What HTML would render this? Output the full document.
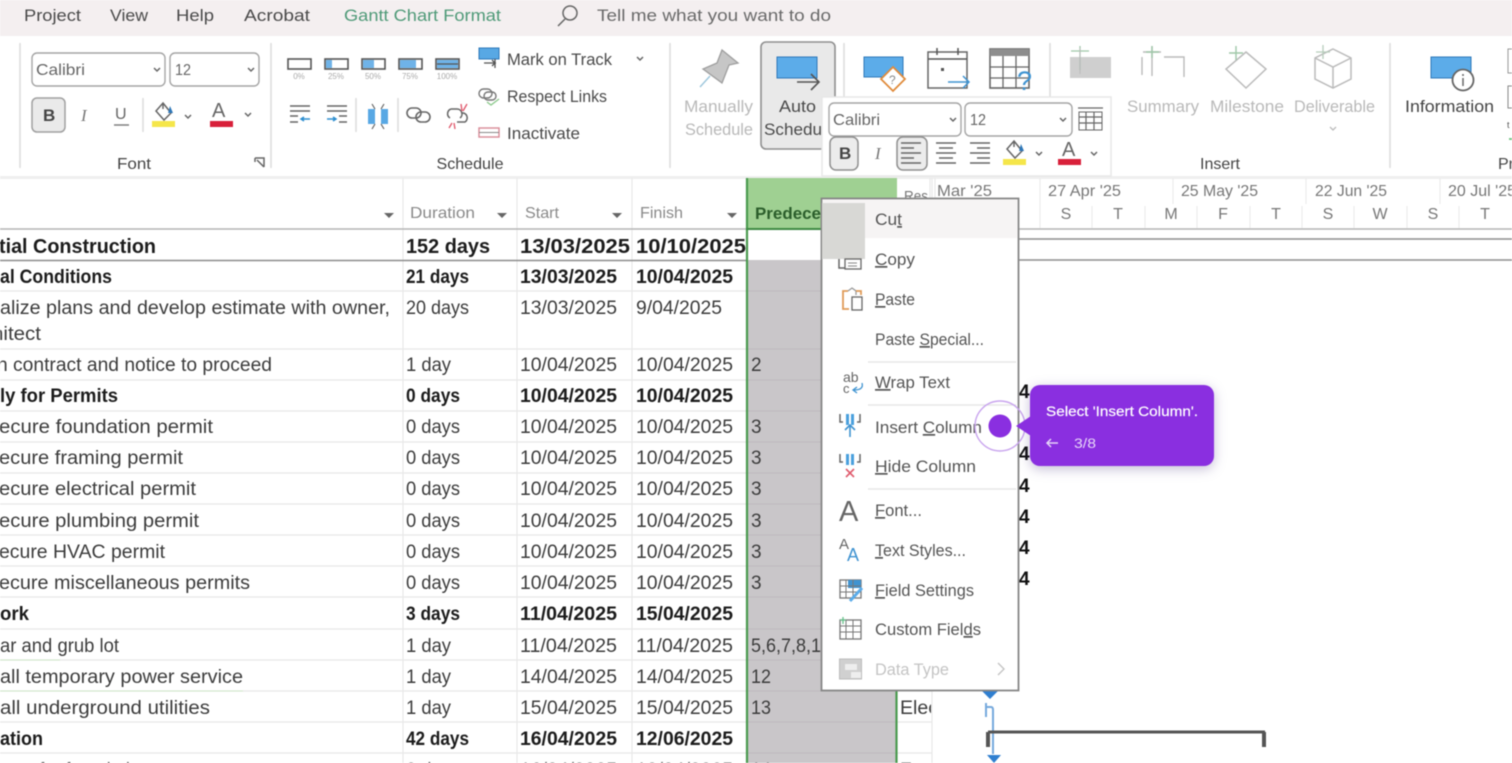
<!DOCTYPE html>
<html><head><meta charset="utf-8"><style>
html,body{margin:0;padding:0;background:#fff;width:1512px;height:763px;overflow:hidden}
svg{position:absolute;left:0;top:0;display:block}
text{font-family:"Liberation Sans",sans-serif}
.n{font-size:19px;fill:#3c3c3c}
.b{font-size:19px;font-weight:bold;fill:#1c1c1c}
.r{font-size:17px;fill:#4a4a4a}
.d{font-size:17px;fill:#b9b9b9}
.h{font-size:16px;fill:#666}
.m{font-size:17px;fill:#555}
.g{stroke:#e8e8e8;stroke-width:1.2}
.ic{fill:none;stroke:#666;stroke-width:1.5}
</style></head><body>
<svg width="1512" height="763" viewBox="0 0 1512 763" lang="en" style="filter:blur(.65px)">
<defs><clipPath id="c1"><rect x="897" y="690" width="34" height="80"/></clipPath></defs>
<rect width="1512" height="763" fill="#fff"/>
<!-- tab strip -->
<rect width="1512" height="36" fill="#f4eff0"/>
<text x="24" y="21" class="r" textLength="57" lengthAdjust="spacingAndGlyphs">Project</text>
<text x="110" y="21" class="r" textLength="38" lengthAdjust="spacingAndGlyphs">View</text>
<text x="176" y="21" class="r" textLength="38" lengthAdjust="spacingAndGlyphs">Help</text>
<text x="244" y="21" class="r" textLength="66" lengthAdjust="spacingAndGlyphs">Acrobat</text>
<text x="344" y="21" style="font-size:17px;fill:#4f9a78" textLength="157" lengthAdjust="spacingAndGlyphs">Gantt Chart Format</text>
<circle cx="570" cy="13" r="7" class="ic"/><path d="M565 19l-7 7" class="ic" stroke-width="2"/>
<text x="597" y="21" style="font-size:17px;fill:#6a6a6a" textLength="234" lengthAdjust="spacingAndGlyphs">Tell me what you want to do</text>
<!-- ribbon separators -->
<g stroke="#dcdcdc" stroke-width="1.5"><path d="M20 43V168M271 43V168M670 43V168M844 43V168M1050 43V100M1390 43V168M143 98V132M356 98V132M398 98V132"/></g>
<rect x="0" y="176" width="1512" height="3" fill="#efefef"/>
<!-- font group -->
<rect x="32" y="53" width="133" height="33" rx="5" fill="#fff" stroke="#a5a5a5" stroke-width="1.4"/>
<rect x="170" y="53" width="89" height="33" rx="5" fill="#fff" stroke="#a5a5a5" stroke-width="1.4"/>
<text x="36" y="75" class="h" textLength="49" lengthAdjust="spacingAndGlyphs">Calibri</text>
<text x="175" y="75" class="h" textLength="16" lengthAdjust="spacingAndGlyphs">12</text>
<path d="M154 68l3 3 3-3M248 68l3 3 3-3M185 115l3 3 3-3M245 113l3 3 3-3M637 57l3 3 3-3" class="ic"/>
<rect x="32" y="98" width="33" height="34" rx="5" fill="#eaeaea" stroke="#a0a0a0" stroke-width="1.5"/>
<text x="43" y="121" style="font-size:17px;font-weight:bold;fill:#444">B</text>
<text x="81" y="121" style="font-size:17px;font-style:italic;fill:#777;font-family:'Liberation Serif',serif">I</text>
<text x="115" y="119" style="font-size:16px;fill:#666">U</text><path d="M114 125h15" stroke="#777" stroke-width="1.4"/>
<path d="M163 103l8 10-7 7-8-9zM163 103v6" class="ic"/><path d="M170 106l3 7h-5z" fill="#2f78b9"/>
<rect x="152" y="121" width="23" height="6" fill="#f5e64a"/>
<text x="212" y="117" style="font-size:20px;fill:#666">A</text><rect x="210" y="121" width="23" height="6" fill="#d8203a"/>
<text x="134" y="169" text-anchor="middle" class="h" style="fill:#444" textLength="34" lengthAdjust="spacingAndGlyphs">Font</text>
<path d="M255 158h9v9M255 158v4M257 160l7 7" class="ic" stroke-width="1"/>
<text x="470" y="169" text-anchor="middle" class="h" style="fill:#444" textLength="67" lengthAdjust="spacingAndGlyphs">Schedule</text>
<!-- percent boxes -->
<g stroke="#555" stroke-width="1.6" fill="#fff">
<rect x="288" y="59" width="23" height="10"/><rect x="325" y="59" width="23" height="10"/><rect x="362" y="59" width="23" height="10"/><rect x="399" y="59" width="23" height="10"/><rect x="436" y="59" width="23" height="10"/></g>
<g fill="#6fb3e8"><rect x="326" y="60" width="6" height="8"/><rect x="363" y="60" width="11" height="8"/><rect x="400" y="60" width="16" height="8"/><rect x="437" y="60" width="21" height="8"/></g>
<path d="M437 64h21" stroke="#555" stroke-width="1.2"/>
<g text-anchor="middle"><text x="299" y="79" style="font-size:8px;fill:#aaa">0%</text><text x="336" y="79" style="font-size:8px;fill:#aaa">25%</text><text x="373" y="79" style="font-size:8px;fill:#aaa">50%</text><text x="410" y="79" style="font-size:8px;fill:#aaa">75%</text><text x="447" y="79" style="font-size:8px;fill:#aaa">100%</text></g>
<!-- indent -->
<path d="M290 106h20M290 111h20M290 116h8M290 122h8M327 106h20M327 111h20M339 116h8M339 122h8" stroke="#666" stroke-width="1.5"/>
<path d="M310 119h-8M304 117l-3 2 3 2M327 119h8M333 117l3 2-3 2" stroke="#2f8fd0" stroke-width="1.5" fill="none"/>
<rect x="368" y="109" width="7" height="15" fill="#58a8e4"/><rect x="381" y="109" width="7" height="15" fill="#58a8e4"/>
<path d="M372 104l3 5M384 104l-3 5M372 129l3-5M384 129l-3-5" stroke="#666" stroke-width="1.2"/>
<rect x="407" y="108" width="14" height="10" rx="5" fill="none" stroke="#666" stroke-width="1.6"/><rect x="416" y="112" width="14" height="10" rx="5" fill="none" stroke="#666" stroke-width="1.6"/>
<path d="M451 109h6a5 5 0 0 1 3 9M461 113a5 5 0 0 1 4 9h-8M450 118a5 5 0 0 1 1-9" class="ic"/>
<path d="M461 104l1 7M467 104l-4 7M449 128l3-5M455 129l-1-6" stroke="#e0566a" stroke-width="1.3"/>
<!-- schedule column right -->
<rect x="479" y="48" width="20" height="11" fill="#58a8e4" stroke="#2f78b9"/><path d="M484 63h12M492 60l3 3-3 3M495 59v9" stroke="#555" stroke-width="1.3" fill="none"/>
<text x="507" y="65" class="r" textLength="105" lengthAdjust="spacingAndGlyphs">Mark on Track</text>
<rect x="479" y="89" width="13" height="9" rx="4.5" fill="none" stroke="#777" stroke-width="1.4"/><rect x="484" y="92" width="12" height="8" rx="4" fill="none" stroke="#777" stroke-width="1.4"/><path d="M487 102l4 3 8-6" stroke="#8cc98c" stroke-width="1.4" fill="none"/>
<text x="507" y="102" class="r" textLength="100" lengthAdjust="spacingAndGlyphs">Respect Links</text>
<rect x="479" y="128" width="20" height="9" fill="#fff" stroke="#d98a97" stroke-width="1.4"/><path d="M479 132.500h20" stroke="#888"/>
<text x="507" y="139" class="r" textLength="73" lengthAdjust="spacingAndGlyphs">Inactivate</text>
<!-- pin + auto -->
<path d="M722 50L738 63 729 65 722 83 703 69 717 63Z" fill="#c6c6c6" stroke="#9e9e9e" stroke-width="1.3"/><path d="M710 76L700 87" stroke="#9cc6dc" stroke-width="1.4"/>
<text x="684" y="112" class="d" textLength="69" lengthAdjust="spacingAndGlyphs">Manually</text>
<text x="685" y="135" class="d" textLength="68" lengthAdjust="spacingAndGlyphs">Schedule</text>
<rect x="761" y="42" width="74" height="107" rx="5" fill="#e9e9e9" stroke="#8f8f8f" stroke-width="1.6"/>
<rect x="777" y="57" width="40" height="21" fill="#5cace9" stroke="#2f78b9"/>
<path d="M797 82h22M811 74l8 8-8 8" stroke="#555" stroke-width="1.6" fill="none"/>
<text x="779" y="112" class="r" textLength="37" lengthAdjust="spacingAndGlyphs">Auto</text>
<text x="764" y="135" class="r" textLength="58" lengthAdjust="spacingAndGlyphs">Schedu</text>
<!-- inspect etc -->
<rect x="864" y="57" width="39" height="20" fill="#5cace9" stroke="#2f78b9"/>
<path d="M893 67l12 12-12 12-12-12z" fill="#fff" stroke="#e08b3c" stroke-width="1.8"/><text x="889" y="84" style="font-size:12px;fill:#888">?</text>
<rect x="928" y="52" width="39" height="36" fill="#fff" stroke="#666" stroke-width="1.5"/><path d="M928 59h39M937 48v7M958 48v7" stroke="#555" stroke-width="1.5"/><rect x="941" y="68" width="3" height="3" fill="#555"/>
<path d="M948 82h21M963 76l6 6-6 6" stroke="#3f93d1" stroke-width="1.5" fill="none"/>
<rect x="990" y="49" width="39" height="39" fill="#fff" stroke="#666" stroke-width="1.6"/><rect x="990" y="49" width="39" height="7" fill="#8d8d8d"/><path d="M990 67h39M990 78h39M1003 56v32M1016 56v32" stroke="#666" stroke-width="1.3"/>
<text x="1017" y="90" style="font-size:27px;fill:#3f93d1">?</text>
<!-- insert group -->
<rect x="1070" y="57" width="41" height="21" fill="#cfcfcf"/><path d="M1080 46v24M1071 51h18" stroke="#9fc7a8" stroke-width="1.3"/><path d="M1080 48v26" stroke="#bbb"/>
<path d="M1152 46v30M1143 52h18M1164 57h20v20M1142 57v18" stroke="#bbb" stroke-width="1.4" fill="none"/><path d="M1152 46v12M1146 52h13" stroke="#9fc7a8" stroke-width="1.4"/>
<path d="M1246 52l20 17-20 19-20-19z" fill="#fff" stroke="#bbb" stroke-width="1.5"/><path d="M1236 46v14M1229 53h14" stroke="#9fc7a8" stroke-width="1.4"/>
<path d="M1333 49l18 9v21l-18 9-18-9V58zM1315 58l18 9 18-9M1333 67v21" fill="none" stroke="#bbb" stroke-width="1.5"/><path d="M1323 45v14M1316 52h14" stroke="#b7cdbc" stroke-width="1.3"/>
<text x="1127" y="112" class="d" textLength="72" lengthAdjust="spacingAndGlyphs">Summary</text>
<text x="1210" y="112" class="d" textLength="74" lengthAdjust="spacingAndGlyphs">Milestone</text>
<text x="1294" y="112" class="d" textLength="81" lengthAdjust="spacingAndGlyphs">Deliverable</text>
<path d="M1330 127l3 3 3-3" fill="none" stroke="#bbb" stroke-width="1.3"/>
<text x="1220" y="169" text-anchor="middle" class="h" style="fill:#444" textLength="40" lengthAdjust="spacingAndGlyphs">Insert</text>
<!-- information -->
<rect x="1431" y="57" width="40" height="21" fill="#5cace9" stroke="#2f78b9"/>
<circle cx="1463" cy="80" r="10.5" fill="#fff" stroke="#666" stroke-width="1.8"/><path d="M1463 78v8" stroke="#666" stroke-width="1.5"/><circle cx="1463" cy="75" r="1" fill="#666"/>
<text x="1405" y="112" style="font-size:17px;fill:#444" textLength="89" lengthAdjust="spacingAndGlyphs">Information</text>
<rect x="1508" y="49" width="8" height="24" fill="#fff" stroke="#999"/><rect x="1508" y="86" width="8" height="22" fill="#fff" stroke="#888"/><path d="M1509 139h6" stroke="#7cc98c" stroke-width="2"/><text x="1507" y="128" style="font-size:9px;fill:#555">t</text>
<text x="1498" y="169" class="h" style="fill:#444">Pr</text>

<!-- table header -->
<rect x="746" y="178" width="151" height="51" fill="#9fd092"/>
<g class="g"><path d="M403 178V763M517 178V763M632 178V763M932 178V763M930 178V229M935 178V229"/></g>
<text x="410" y="218" class="h" style="fill:#8a8a8a" textLength="65" lengthAdjust="spacingAndGlyphs">Duration</text>
<text x="525" y="218" class="h" style="fill:#8a8a8a" textLength="34" lengthAdjust="spacingAndGlyphs">Start</text>
<text x="640" y="218" class="h" style="fill:#8a8a8a" textLength="43" lengthAdjust="spacingAndGlyphs">Finish</text>
<g fill="#666"><path d="M384 213h10l-5 5zM497 213h10l-5 5zM612 213h10l-5 5zM727 213h10l-5 5z"/></g>
<text x="755" y="219" style="font-size:17px;font-weight:bold;fill:#2b5e2b" textLength="66" lengthAdjust="spacingAndGlyphs">Predece</text>
<text x="904" y="201" style="font-size:15px;fill:#777" textLength="24" lengthAdjust="spacingAndGlyphs">Res</text>
<text x="937" y="196" class="h" style="fill:#777" textLength="55" lengthAdjust="spacingAndGlyphs">Mar '25</text>
<text x="1048" y="196" class="h" style="fill:#777" textLength="73" lengthAdjust="spacingAndGlyphs">27 Apr '25</text>
<text x="1181" y="196" class="h" style="fill:#777" textLength="77" lengthAdjust="spacingAndGlyphs">25 May '25</text>
<text x="1315" y="196" class="h" style="fill:#777" textLength="72" lengthAdjust="spacingAndGlyphs">22 Jun '25</text>
<text x="1448" y="196" class="h" style="fill:#777" textLength="68" lengthAdjust="spacingAndGlyphs">20 Jul '25</text>
<g class="h" style="fill:#777" text-anchor="middle"><text x="1066" y="219">S</text><text x="1118" y="219">T</text><text x="1171" y="219">M</text><text x="1223" y="219">F</text><text x="1276" y="219">T</text><text x="1328" y="219">S</text><text x="1380" y="219">W</text><text x="1433" y="219">S</text><text x="1485" y="219">T</text></g>
<g stroke="#ececec" stroke-width="1.2"><path d="M1040 178V228M1173 178V204M1306 178V204M1440 178V204M1092 206V228M1145 206V228M1197 206V228M1250 206V228M1302 206V228M1354 206V228M1407 206V228M1459 206V228"/></g>

<!-- selected column -->
<rect x="748" y="260" width="148" height="503" fill="#c9c6c9"/>
<g stroke="#bdbabd" stroke-width="1"><path d="M748 291H896M748 349H896M748 380H896M748 411H896M748 442H896M748 473H896M748 504H896M748 535H896M748 566H896M748 597H896M748 629H896M748 660H896M748 691H896M748 722H896M748 753H896"/></g>
<!-- rows -->
<g class="g"><path d="M0 291H746M0 349H746M0 380H746M0 411H746M0 442H746M0 473H746M0 504H746M0 535H746M0 566H746M0 597H746M0 629H746M0 660H746M0 691H746M0 722H746M0 753H746M897 691H932M897 722H932M897 753H932"/></g>
<path d="M0 691H243M0 660H60" stroke="#cfe8c8" stroke-width="1"/>
<path d="M0 229H746M897 229H1512" stroke="#b5b5b5" stroke-width="1.4"/>
<path d="M0 260.500H746M897 260H1512M897 239H1512" stroke="#8d8d8d" stroke-width="1.6"/>
<path d="M747 178V763M896.500 229V763" stroke="#4a9a4f" stroke-width="2.200"/>
<path d="M746 229H897" stroke="#3d8a42" stroke-width="2"/>

<g transform="translate(0,1)">
<text x="-1" y="252" class="b" style="font-size:20px" textLength="157" lengthAdjust="spacingAndGlyphs">tial Construction</text>
<text x="406" y="252" class="b" style="font-size:20px" textLength="84" lengthAdjust="spacingAndGlyphs">152 days</text>
<text x="520" y="252" class="b" style="font-size:20px" textLength="110" lengthAdjust="spacingAndGlyphs">13/03/2025</text>
<text x="636" y="252" class="b" style="font-size:20px" textLength="110" lengthAdjust="spacingAndGlyphs">10/10/2025</text>

<text x="0" y="282" class="b" textLength="112" lengthAdjust="spacingAndGlyphs">al Conditions</text>
<text x="406" y="282" class="b" textLength="63" lengthAdjust="spacingAndGlyphs">21 days</text>
<text x="520" y="282" class="b" textLength="97" lengthAdjust="spacingAndGlyphs">13/03/2025</text>
<text x="636" y="282" class="b" textLength="97" lengthAdjust="spacingAndGlyphs">10/04/2025</text>

<text x="0" y="313" class="n" textLength="390" lengthAdjust="spacingAndGlyphs">alize plans and develop estimate with owner,</text>
<text x="-8" y="339" class="n" textLength="49" lengthAdjust="spacingAndGlyphs">hitect</text>
<text x="406" y="313" class="n" textLength="63" lengthAdjust="spacingAndGlyphs">20 days</text>
<text x="520" y="313" class="n" textLength="97" lengthAdjust="spacingAndGlyphs">13/03/2025</text>
<text x="636" y="313" class="n" textLength="86" lengthAdjust="spacingAndGlyphs">9/04/2025</text>

<text x="-3" y="370" class="n" textLength="275" lengthAdjust="spacingAndGlyphs">n contract and notice to proceed</text>
<text x="406" y="370" class="n" textLength="45" lengthAdjust="spacingAndGlyphs">1 day</text>
<text x="520" y="370" class="n" textLength="97" lengthAdjust="spacingAndGlyphs">10/04/2025</text>
<text x="636" y="370" class="n" textLength="97" lengthAdjust="spacingAndGlyphs">10/04/2025</text>
<text x="751" y="370" class="n">2</text>

<text x="0" y="401" class="b" textLength="118" lengthAdjust="spacingAndGlyphs">ly for Permits</text>
<text x="406" y="401" class="b" textLength="54" lengthAdjust="spacingAndGlyphs">0 days</text>
<text x="520" y="401" class="b" textLength="97" lengthAdjust="spacingAndGlyphs">10/04/2025</text>
<text x="636" y="401" class="b" textLength="97" lengthAdjust="spacingAndGlyphs">10/04/2025</text>

<text x="-1" y="432" class="n" textLength="214" lengthAdjust="spacingAndGlyphs">ecure foundation permit</text>
<text x="406" y="432" class="n" textLength="54" lengthAdjust="spacingAndGlyphs">0 days</text>
<text x="520" y="432" class="n" textLength="97" lengthAdjust="spacingAndGlyphs">10/04/2025</text>
<text x="636" y="432" class="n" textLength="97" lengthAdjust="spacingAndGlyphs">10/04/2025</text>
<text x="751" y="432" class="n">3</text>

<text x="-1" y="463" class="n" textLength="184" lengthAdjust="spacingAndGlyphs">ecure framing permit</text>
<text x="406" y="463" class="n" textLength="54" lengthAdjust="spacingAndGlyphs">0 days</text>
<text x="520" y="463" class="n" textLength="97" lengthAdjust="spacingAndGlyphs">10/04/2025</text>
<text x="636" y="463" class="n" textLength="97" lengthAdjust="spacingAndGlyphs">10/04/2025</text>
<text x="751" y="463" class="n">3</text>

<text x="-1" y="494" class="n" textLength="197" lengthAdjust="spacingAndGlyphs">ecure electrical permit</text>
<text x="406" y="494" class="n" textLength="54" lengthAdjust="spacingAndGlyphs">0 days</text>
<text x="520" y="494" class="n" textLength="97" lengthAdjust="spacingAndGlyphs">10/04/2025</text>
<text x="636" y="494" class="n" textLength="97" lengthAdjust="spacingAndGlyphs">10/04/2025</text>
<text x="751" y="494" class="n">3</text>

<text x="-1" y="526" class="n" textLength="200" lengthAdjust="spacingAndGlyphs">ecure plumbing permit</text>
<text x="406" y="526" class="n" textLength="54" lengthAdjust="spacingAndGlyphs">0 days</text>
<text x="520" y="526" class="n" textLength="97" lengthAdjust="spacingAndGlyphs">10/04/2025</text>
<text x="636" y="526" class="n" textLength="97" lengthAdjust="spacingAndGlyphs">10/04/2025</text>
<text x="751" y="526" class="n">3</text>

<text x="-1" y="557" class="n" textLength="166" lengthAdjust="spacingAndGlyphs">ecure HVAC permit</text>
<text x="406" y="557" class="n" textLength="54" lengthAdjust="spacingAndGlyphs">0 days</text>
<text x="520" y="557" class="n" textLength="97" lengthAdjust="spacingAndGlyphs">10/04/2025</text>
<text x="636" y="557" class="n" textLength="97" lengthAdjust="spacingAndGlyphs">10/04/2025</text>
<text x="751" y="557" class="n">3</text>

<text x="-1" y="588" class="n" textLength="251" lengthAdjust="spacingAndGlyphs">ecure miscellaneous permits</text>
<text x="406" y="588" class="n" textLength="54" lengthAdjust="spacingAndGlyphs">0 days</text>
<text x="520" y="588" class="n" textLength="97" lengthAdjust="spacingAndGlyphs">10/04/2025</text>
<text x="636" y="588" class="n" textLength="97" lengthAdjust="spacingAndGlyphs">10/04/2025</text>
<text x="751" y="588" class="n">3</text>

<text x="0" y="619" class="b" textLength="29" lengthAdjust="spacingAndGlyphs">ork</text>
<text x="406" y="619" class="b" textLength="54" lengthAdjust="spacingAndGlyphs">3 days</text>
<text x="520" y="619" class="b" textLength="97" lengthAdjust="spacingAndGlyphs">11/04/2025</text>
<text x="636" y="619" class="b" textLength="97" lengthAdjust="spacingAndGlyphs">15/04/2025</text>

<text x="0" y="651" class="n" textLength="119" lengthAdjust="spacingAndGlyphs">ar and grub lot</text>
<text x="406" y="651" class="n" textLength="45" lengthAdjust="spacingAndGlyphs">1 day</text>
<text x="520" y="651" class="n" textLength="97" lengthAdjust="spacingAndGlyphs">11/04/2025</text>
<text x="636" y="651" class="n" textLength="97" lengthAdjust="spacingAndGlyphs">11/04/2025</text>
<text x="751" y="651" class="n" textLength="70" lengthAdjust="spacingAndGlyphs">5,6,7,8,1</text>

<text x="0" y="682" class="n" textLength="243" lengthAdjust="spacingAndGlyphs">all temporary power service</text>
<text x="406" y="682" class="n" textLength="45" lengthAdjust="spacingAndGlyphs">1 day</text>
<text x="520" y="682" class="n" textLength="97" lengthAdjust="spacingAndGlyphs">14/04/2025</text>
<text x="636" y="682" class="n" textLength="97" lengthAdjust="spacingAndGlyphs">14/04/2025</text>
<text x="751" y="682" class="n" textLength="20" lengthAdjust="spacingAndGlyphs">12</text>

<text x="0" y="713" class="n" textLength="210" lengthAdjust="spacingAndGlyphs">all underground utilities</text>
<text x="406" y="713" class="n" textLength="45" lengthAdjust="spacingAndGlyphs">1 day</text>
<text x="520" y="713" class="n" textLength="97" lengthAdjust="spacingAndGlyphs">15/04/2025</text>
<text x="636" y="713" class="n" textLength="97" lengthAdjust="spacingAndGlyphs">15/04/2025</text>
<text x="751" y="713" class="n" textLength="20" lengthAdjust="spacingAndGlyphs">13</text>
<g clip-path="url(#c1)"><text x="900" y="713" class="n" textLength="38" lengthAdjust="spacingAndGlyphs">Elec</text></g>

<text x="0" y="744" class="b" textLength="43" lengthAdjust="spacingAndGlyphs">ation</text>
<text x="406" y="744" class="b" textLength="63" lengthAdjust="spacingAndGlyphs">42 days</text>
<text x="520" y="744" class="b" textLength="97" lengthAdjust="spacingAndGlyphs">16/04/2025</text>
<text x="636" y="744" class="b" textLength="97" lengthAdjust="spacingAndGlyphs">12/06/2025</text>

<text x="0" y="775" class="n" textLength="150" lengthAdjust="spacingAndGlyphs">vate for foundation</text>
<text x="406" y="775" class="n" textLength="54" lengthAdjust="spacingAndGlyphs">3 days</text>
<text x="520" y="775" class="n" textLength="97" lengthAdjust="spacingAndGlyphs">16/04/2025</text>
<text x="636" y="775" class="n" textLength="97" lengthAdjust="spacingAndGlyphs">18/04/2025</text>
<text x="751" y="775" class="n" textLength="20" lengthAdjust="spacingAndGlyphs">14</text>
<text x="900" y="775" class="n" textLength="30" lengthAdjust="spacingAndGlyphs">Exc</text>
</g>

<!-- gantt -->
<g style="font-size:19px;font-weight:bold;fill:#111"><text x="1019" y="398">4</text><text x="1019" y="460">4</text><text x="1019" y="492">4</text><text x="1019" y="523">4</text><text x="1019" y="554">4</text><text x="1019" y="585">4</text></g>
<path d="M982 691h16l-8 8z" fill="#2f7fd0"/>
<path d="M986 703v14M986 707h5q2 0 2 3v44" fill="none" stroke="#76a9dc" stroke-width="2"/>
<path d="M988 732H1265" stroke="#555" stroke-width="3"/><path d="M988 732v15M1264 732v15" stroke="#555" stroke-width="4"/>
<path d="M987 755h14l-7 8z" fill="#2f7fd0"/>

<!-- mini toolbar -->
<rect x="822" y="97" width="289" height="79" fill="#fff" stroke="#e8e8e8" stroke-width="1.5"/>
<rect x="829" y="103" width="132" height="33" rx="5" fill="#fff" stroke="#a5a5a5" stroke-width="1.4"/>
<rect x="965" y="103" width="107" height="33" rx="5" fill="#fff" stroke="#a5a5a5" stroke-width="1.4"/>
<text x="833" y="125" class="h" textLength="47" lengthAdjust="spacingAndGlyphs">Calibri</text>
<text x="970" y="125" class="h" textLength="16" lengthAdjust="spacingAndGlyphs">12</text>
<path d="M950 118l3 3 3-3M1060 118l3 3 3-3M1036 152l3 3 3-3M1091 152l3 3 3-3" class="ic"/>
<rect x="1079" y="112" width="23" height="18" fill="#fff" stroke="#666"/><path d="M1079 117h23M1079 123h23M1086 112v18M1094 112v18M1078 108h25" stroke="#666" stroke-width="1.2"/>
<rect x="830" y="137" width="28" height="33" rx="6" fill="#ececec" stroke="#8f8f8f" stroke-width="1.5"/>
<text x="839" y="159" style="font-size:17px;font-weight:bold;fill:#444">B</text>
<text x="875" y="159" style="font-size:17px;font-style:italic;fill:#777;font-family:'Liberation Serif',serif">I</text>
<rect x="897" y="137" width="30" height="33" rx="6" fill="#ececec" stroke="#8f8f8f" stroke-width="1.5"/>
<path d="M901 143h20M901 148h13M901 153h20M901 158h13M901 163h20M936 143h20M939 148h14M936 153h20M939 158h14M936 163h20M970 143h20M977 148h13M970 153h20M977 158h13M970 163h20" stroke="#666" stroke-width="1.5"/>
<path d="M1014 141l8 10-7 7-8-9zM1014 141v6" class="ic"/><path d="M1021 144l3 7h-5z" fill="#2f78b9"/>
<rect x="1003" y="159" width="23" height="6" fill="#f5e64a"/>
<text x="1062" y="156" style="font-size:20px;fill:#666">A</text><rect x="1058" y="159" width="23" height="6" fill="#d8203a"/>

<!-- context menu -->
<rect x="821.500" y="198.500" width="197" height="492" fill="#fff" stroke="#868686" stroke-width="1.800"/>
<rect x="823" y="200" width="194" height="38" fill="#f6f4f4"/>
<rect x="822" y="203" width="43" height="56" fill="#d8d8d5"/>
<path d="M868 362H1016M868 405H1016M868 489H1016" stroke="#e2e2e2" stroke-width="1.3"/>
<text x="875" y="225" class="m" textLength="27" lengthAdjust="spacingAndGlyphs">Cu<tspan text-decoration="underline">t</tspan></text>
<text x="875" y="265" class="m" textLength="40" lengthAdjust="spacingAndGlyphs"><tspan text-decoration="underline">C</tspan>opy</text>
<text x="875" y="305" class="m" textLength="40" lengthAdjust="spacingAndGlyphs"><tspan text-decoration="underline">P</tspan>aste</text>
<text x="875" y="345" class="m" textLength="109" lengthAdjust="spacingAndGlyphs">Paste <tspan text-decoration="underline">S</tspan>pecial...</text>
<text x="875" y="388" class="m" textLength="75" lengthAdjust="spacingAndGlyphs"><tspan text-decoration="underline">W</tspan>rap Text</text>
<text x="875" y="433" class="m" textLength="107" lengthAdjust="spacingAndGlyphs">Insert <tspan text-decoration="underline">C</tspan>olumn</text>
<text x="875" y="472" class="m" textLength="101" lengthAdjust="spacingAndGlyphs"><tspan text-decoration="underline">H</tspan>ide Column</text>
<text x="875" y="516" class="m" textLength="47" lengthAdjust="spacingAndGlyphs"><tspan text-decoration="underline">F</tspan>ont...</text>
<text x="875" y="556" class="m" textLength="91" lengthAdjust="spacingAndGlyphs"><tspan text-decoration="underline">T</tspan>ext Styles...</text>
<text x="875" y="596" class="m" textLength="99" lengthAdjust="spacingAndGlyphs"><tspan text-decoration="underline">F</tspan>ield Settings</text>
<text x="875" y="635" class="m" textLength="106" lengthAdjust="spacingAndGlyphs">Custom Fiel<tspan text-decoration="underline">d</tspan>s</text>
<text x="875" y="675" class="m" style="fill:#c4c4c4" textLength="74" lengthAdjust="spacingAndGlyphs">Data Type</text>
<path d="M998 663l6 6-6 6" fill="none" stroke="#c4c4c4" stroke-width="1.4"/>
<!-- menu icons -->
<path d="M839 259v9h6" class="ic"/><rect x="845" y="259" width="16" height="10" fill="#fff" stroke="#666" stroke-width="1.3"/><path d="M848 263h9M848 266h9" stroke="#888"/>
<path d="M848 291h-5v18h6" fill="none" stroke="#e09b58" stroke-width="1.8"/><path d="M848 291l4-3 4 3v4" fill="none" stroke="#999" stroke-width="1.3"/><path d="M856 291h5v4" fill="none" stroke="#e09b58" stroke-width="1.8"/><rect x="852" y="297" width="10" height="13" fill="#fff" stroke="#666" stroke-width="1.3"/>
<text x="843" y="382" style="font-size:14px;fill:#666">ab</text><text x="843" y="393" style="font-size:13px;fill:#666">c</text><path d="M862 383q2 7-8 7M857 387l-4 3 4 3" fill="none" stroke="#3f93d1" stroke-width="1.3"/>
<path d="M840 414v8h3M860 414v8h-3" class="ic"/><rect x="846" y="414" width="3" height="11" fill="#4aa0dd"/><rect x="851" y="414" width="3" height="11" fill="#4aa0dd"/><path d="M850 437v-11M845 430l5-5 5 5" fill="none" stroke="#3f93d1" stroke-width="1.6"/>
<path d="M840 454v8h3M860 454v8h-3" class="ic"/><rect x="846" y="454" width="3" height="11" fill="#4aa0dd"/><rect x="851" y="454" width="3" height="11" fill="#4aa0dd"/><path d="M846 469l8 8M854 469l-8 8" stroke="#e05b6d" stroke-width="1.6"/>
<text x="839" y="521" style="font-size:29px;fill:#666">A</text>
<text x="839" y="549" style="font-size:15px;fill:#666">A</text><text x="847" y="561" style="font-size:18px;fill:#3f93d1">A</text>
<rect x="840" y="580" width="21" height="18" fill="#fff" stroke="#777" stroke-width="1.3"/><rect x="848" y="580" width="13" height="8" fill="#3f93d1"/><path d="M840 586h21M840 592h21M846 580v18M853 580v18" stroke="#777"/><path d="M850 601l12-13" stroke="#5cace9" stroke-width="3"/>
<rect x="840" y="620" width="21" height="19" fill="#fff" stroke="#777" stroke-width="1.3"/><path d="M840 626h21M840 632h21M846 620v19M853 620v19" stroke="#777"/><path d="M843 617v7M840 620h6" stroke="#66c08a" stroke-width="1.3"/>
<rect x="839.500" y="659" width="22" height="20" fill="#d0d0d0" stroke="#bbb"/><path d="M845 664h12v6h-12zM851 672h10v6h-10z" fill="#eee"/>

<!-- tooltip -->
<circle cx="1000" cy="426" r="25" fill="none" stroke="#c9a5ee" stroke-width="1.400"/>
<rect x="1030" y="385" width="184" height="81" rx="10" fill="#8a2fe0" style="filter:drop-shadow(0 3px 6px rgba(60,40,120,.3))"/>
<path d="M1016 426l15-10v20z" fill="#8a2fe0"/>
<circle cx="1000" cy="426" r="11.500" fill="#8a2fe0"/>
<text x="1046" y="416" style="font-size:14px;fill:#fff;stroke:#fff;stroke-width:.2" textLength="152" lengthAdjust="spacingAndGlyphs">Select 'Insert Column'.</text>
<path d="M1058 443h-11M1051 439l-4 4 4 4" fill="none" stroke="#e6d5f8" stroke-width="1.500"/>
<text x="1074" y="448" style="font-size:13.500px;fill:#e6d5f8" textLength="22" lengthAdjust="spacingAndGlyphs">3/8</text>
</svg>
</body></html>
